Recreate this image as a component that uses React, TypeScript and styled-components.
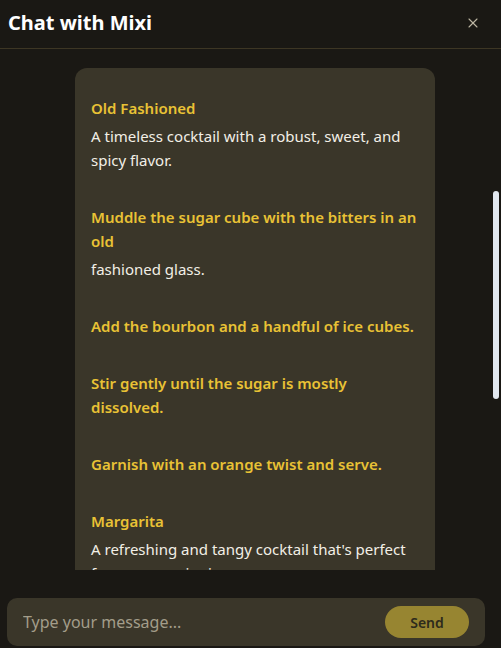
import React, { useLayoutEffect, useRef, useState } from "react";
import styled, { createGlobalStyle } from "styled-components";
import { X } from "lucide-react";

const Global = createGlobalStyle`
  html, body { margin: 0; padding: 0; background: #1a1814; }
  body { font-family: "Noto Sans", "Open Sans", sans-serif; }
  * { box-sizing: border-box; }
`;

const Page = styled.div`
  height: 648px;
  display: flex;
  flex-direction: column;
  background: #1a1814;
  color: #f2efe6;
`;

const Header = styled.header`
  height: 49px;
  flex: 0 0 49px;
  display: flex;
  align-items: center;
  justify-content: space-between;
  padding: 0 20px 3px 8px;
  border-bottom: 1px solid #3d3624;
`;

const Title = styled.h1`
  margin: 0;
  font-size: 20px;
  font-weight: 700;
  color: #ffffff;
`;

const CloseButton = styled.button`
  background: none;
  border: 0;
  padding: 0;
  display: flex;
  color: #bdb7a3;
  cursor: pointer;
`;

const ScrollArea = styled.div`
  position: relative;
  flex: 1;
  min-height: 0;
  display: flex;
`;

const Scroller = styled.div`
  flex: 1;
  overflow-y: auto;
  scrollbar-width: none;
  &::-webkit-scrollbar { display: none; }
`;

const Thumb = styled.div`
  position: absolute;
  right: 2px;
  width: 6px;
  border-radius: 3px;
  background: #e2e8f0;
`;

const List = styled.div`
  display: flex;
  flex-direction: column;
  gap: 19px;
  padding: 41px 66px 100px 75px;
`;

const Bubble = styled.div<{ $user?: boolean }>`
  align-self: ${(p) => (p.$user ? "flex-end" : "flex-start")};
  max-width: 360px;
  width: ${(p) => (p.$user ? "auto" : "360px")};
  background: ${(p) => (p.$user ? "#978531" : "#3a3629")};
  color: ${(p) => (p.$user ? "#1d1b14" : "#f2efe6")};
  border-radius: 12px;
  padding: 28px 16px 24px;
  font-size: 15px;
  line-height: 24px;
`;

const Heading = styled.h3`
  margin: 33px 0 4px;
  font-size: 15px;
  line-height: 24px;
  font-weight: 600;
  color: #e9c235;
  &:first-child { margin-top: 0; }
`;

const Para = styled.p`
  margin: 0;
`;

const Footer = styled.div`
  padding: 28px 16px 2px 7px;
`;

const InputBar = styled.form`
  height: 48px;
  display: flex;
  align-items: center;
  gap: 12px;
  background: #3a3629;
  border-radius: 10px;
  padding: 0 16px;
`;

const Input = styled.input`
  flex: 1;
  min-width: 0;
  padding: 0;
  background: transparent;
  border: 0;
  outline: none;
  font-family: inherit;
  font-size: 16px;
  color: #f2efe6;
  &::placeholder { color: #a39d8a; }
`;

const SendButton = styled.button`
  width: 84px;
  height: 32px;
  border: 0;
  border-radius: 16px;
  background: #978531;
  color: #2d2a1c;
  font-family: inherit;
  font-size: 14px;
  font-weight: 600;
  cursor: pointer;
`;

type Block = { h?: string; p?: string };

const recipe: Block[] = [
  { h: "Old Fashioned", p: "A timeless cocktail with a robust, sweet, and spicy flavor." },
  { h: "Muddle the sugar cube with the bitters in an old", p: "fashioned glass." },
  { h: "Add the bourbon and a handful of ice cubes." },
  { h: "Stir gently until the sugar is mostly dissolved." },
  { h: "Garnish with an orange twist and serve." },
  { h: "Margarita", p: "A refreshing and tangy cocktail that's perfect for summer sipping." },
  { h: "Rim a glass with salt." },
  { h: "Fill a shaker with ice." },
  { h: "Add tequila, lime juice, and triple sec." },
  { h: "Shake well and strain into the glass." },
  { h: "Garnish with a lime wedge and serve." },
];

export default function App() {
  const scrollRef = useRef<HTMLDivElement>(null);
  const targetRef = useRef<HTMLDivElement>(null);
  const [thumb, setThumb] = useState({ top: 0, height: 0 });

  const update = () => {
    const s = scrollRef.current;
    if (!s) return;
    const ratio = s.clientHeight / s.scrollHeight;
    setThumb({ top: s.scrollTop * ratio, height: s.clientHeight * ratio });
  };

  useLayoutEffect(() => {
    const s = scrollRef.current;
    const t = targetRef.current;
    if (s && t) s.scrollTop = t.offsetTop - s.offsetTop - 19;
    update();
  }, []);

  return (
    <Page>
      <Global />
      <Header>
        <Title>Chat with Mixi</Title>
        <CloseButton aria-label="Close">
          <X size={16} strokeWidth={1.6} />
        </CloseButton>
      </Header>
      <ScrollArea>
        <Scroller ref={scrollRef} onScroll={update}>
          <List>
            <Bubble>
              <Para>Hi! I'm Mixi, your cocktail assistant. Ask me for a recipe, a twist on a classic, or something to make with what you have at home.</Para>
            </Bubble>
            <Bubble $user>
              <Para>Hi Mixi!</Para>
            </Bubble>
            <Bubble $user>
              <Para>Can you suggest a couple of classic cocktails?</Para>
            </Bubble>
            <Bubble ref={targetRef}>
              {recipe.map((b, i) => (
                <React.Fragment key={i}>
                  {b.h && <Heading>{b.h}</Heading>}
                  {b.p && <Para>{b.p}</Para>}
                </React.Fragment>
              ))}
            </Bubble>
          </List>
        </Scroller>
        <Thumb style={{ top: thumb.top, height: thumb.height }} />
      </ScrollArea>
      <Footer>
        <InputBar onSubmit={(e) => e.preventDefault()}>
          <Input placeholder="Type your message..." />
          <SendButton type="submit">Send</SendButton>
        </InputBar>
      </Footer>
    </Page>
  );
}
